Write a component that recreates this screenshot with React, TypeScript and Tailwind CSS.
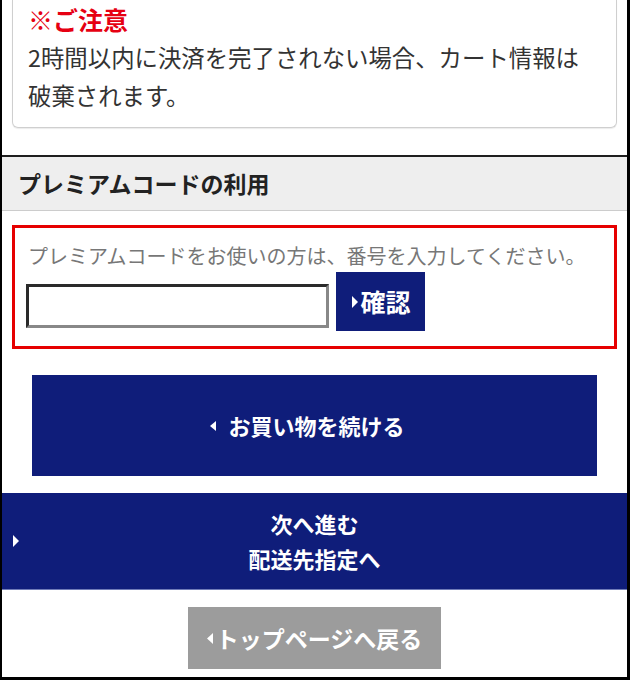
import React from 'react';

const FONT = "font-['Noto_Sans_CJK_JP','Noto_Sans',sans-serif]";

function Tri({ dir, className }: { dir: 'left' | 'right'; className?: string }) {
  return (
    <svg viewBox="0 0 6 10" className={className} fill="currentColor" preserveAspectRatio="none">
      {dir === 'right' ? <path d="M0 0 L6 5 L0 10 Z" /> : <path d="M6 0 L0 5 L6 10 Z" />}
    </svg>
  );
}

export default function App() {
  return (
    <div className={`${FONT} w-[630px] h-[680px] overflow-hidden bg-white border-l-2 border-r-[3px] border-b-[3px] border-black`}>
      {/* notice card, top edge scrolled off */}
      <div className="mx-[10px] border border-t-0 border-[#cfcfcf] rounded-b-md px-[15px] pt-[3px] pb-[13px] shadow-[0_1px_1px_rgba(0,0,0,0.08)]">
        <p className="text-[#e60012] text-[25px] font-bold leading-[32px]">※ご注意</p>
        <p className="text-[#333] text-[23.4px] leading-[38px] mt-[3px]">
          2時間以内に決済を完了されない場合、カート情報は
          <br />
          破棄されます。
        </p>
      </div>

      <div className="mt-[27px] border-t-2 border-[#1e1e1e]">
        <div className="bg-[#eeeeee] border-b border-[#cccccc] h-[54px] flex items-center px-[16px]">
          <h2 className="text-[#222] text-[23px] font-bold">プレミアムコードの利用</h2>
        </div>
      </div>

      <div className="mx-[10px] mt-[14px] border-[3px] border-[#e60000] px-[11px] pt-[14px] pb-[15px]">
        <p className="text-[#777] text-[20px] leading-[28px] pl-[2px]">
          プレミアムコードをお使いの方は、番号を入力してください。
        </p>
        <div className="flex items-end gap-[7px] mt-[2px]">
          <input
            type="text"
            className="w-[303px] h-[44px] mb-[3px] bg-white border-[3px] border-t-[#2a2a2a] border-l-[#2a2a2a] border-b-[#888] border-r-[#888] outline-none"
          />
          <button className="w-[89px] h-[59px] bg-[#0f1d7a] text-white text-[25px] font-bold flex items-center justify-center gap-[2px] pl-[2px]">
            <Tri dir="right" className="w-[6px] h-[12px]" />
            確認
          </button>
        </div>
      </div>

      <div className="mx-[30px] mt-[26px]">
        <button className="w-full h-[101px] bg-[#0f1d7a] text-white text-[22px] font-bold flex items-center justify-center gap-[12px] pr-[14px]">
          <Tri dir="left" className="w-[6px] h-[10px]" />
          お買い物を続ける
        </button>
      </div>

      <button className="relative mt-[17px] w-full h-[97px] bg-[#0f1d7a] border-b border-[#6f7bb8] text-white text-[22px] font-bold leading-[35px] flex flex-col items-center justify-center">
        <Tri dir="right" className="absolute left-[11px] top-[42px] w-[6px] h-[12px]" />
        <span>次へ進む</span>
        <span>配送先指定へ</span>
      </button>

      <div className="flex justify-center mt-[17px]">
        <button className="w-[253px] h-[62px] bg-[#9c9c9c] text-white text-[23px] font-bold flex items-center justify-center gap-[3px]">
          <Tri dir="left" className="w-[6px] h-[11px]" />
          トップページへ戻る
        </button>
      </div>
    </div>
  );
}
